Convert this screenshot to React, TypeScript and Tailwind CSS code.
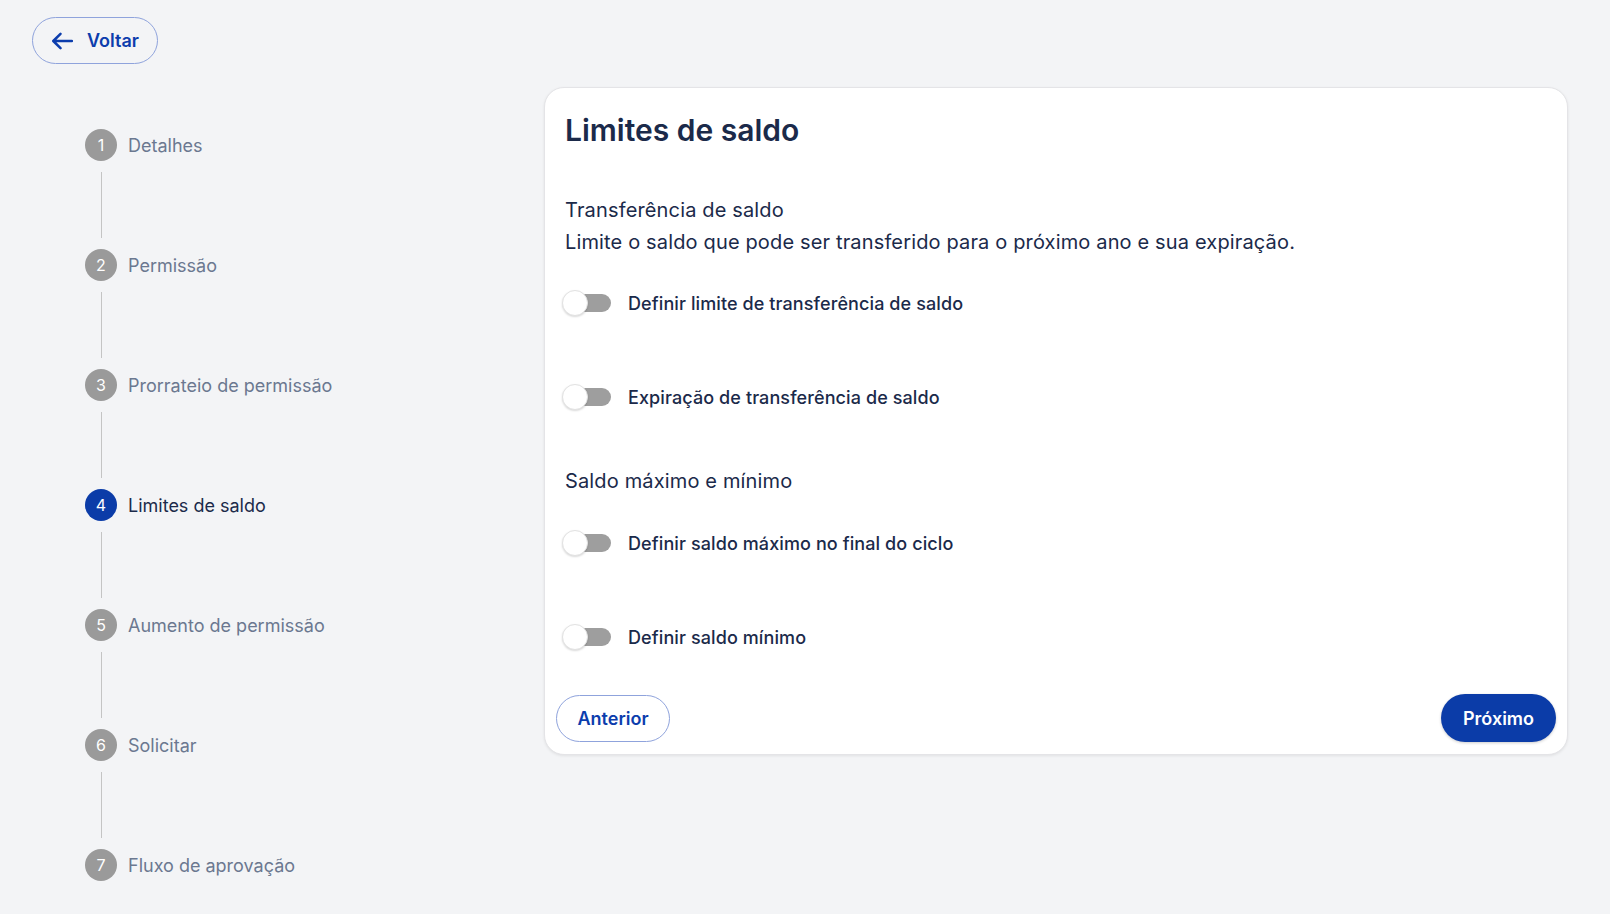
import React, { useState } from 'react';

const steps = [
  'Detalhes',
  'Permissão',
  'Prorrateio de permissão',
  'Limites de saldo',
  'Aumento de permissão',
  'Solicitar',
  'Fluxo de aprovação',
];

function Toggle({ checked, onChange }: { checked: boolean; onChange: () => void }) {
  return (
    <button
      type="button"
      onClick={onChange}
      className="relative w-[51px] h-[28px] shrink-0 ml-[-4px]"
    >
      <span
        className={`absolute left-[10px] top-[5px] w-[40px] h-[18px] rounded-full ${
          checked ? 'bg-[#0b3ca8]' : 'bg-[#9e9e9e]'
        }`}
      />
      <span
        className={`absolute top-[1px] w-[26px] h-[26px] rounded-full bg-white border border-[#e2e2e2] shadow-[0_1px_2px_rgba(0,0,0,0.15)] ${
          checked ? 'left-[24px]' : 'left-[1px]'
        }`}
      />
    </button>
  );
}

function ToggleRow({ label, className }: { label: string; className?: string }) {
  const [on, setOn] = useState(false);
  return (
    <div className={`flex items-center gap-[16px] h-[28px] ${className ?? ''}`}>
      <Toggle checked={on} onChange={() => setOn(!on)} />
      <span className="text-[18px] font-medium tracking-[0.1px] text-[#1b2a4a]">{label}</span>
    </div>
  );
}

export default function App() {
  const current = 4;

  return (
    <div
      className="min-h-screen bg-[#f3f4f6] pt-[17px] px-[32px]"
      style={{ fontFamily: 'Inter, "Noto Sans", sans-serif' }}
    >
      <button
        type="button"
        className="flex items-center h-[47px] w-[126px] pl-[18px] gap-[14px] rounded-full border border-[#8fa3dc] text-[#0c3dad] text-[18px] font-semibold"
      >
        <svg width="22" height="18" viewBox="0 0 22 18" fill="none">
          <path
            d="M21 9H2.5M9.5 1.8 2.3 9l7.2 7.2"
            stroke="currentColor"
            strokeWidth="2.5"
            strokeLinecap="round"
            strokeLinejoin="round"
          />
        </svg>
        Voltar
      </button>

      <div className="flex items-start mt-[23px]">
        <div className="w-[512px] shrink-0 pl-[53px] pt-[42px]">
          {steps.map((name, i) => {
            const n = i + 1;
            const active = n === current;
            return (
              <div key={name}>
                <div className="flex items-center gap-[11px] h-[32px]">
                  <div
                    className={`w-[32px] h-[32px] rounded-full flex items-center justify-center text-white text-[16px] ${
                      active ? 'bg-[#0b3ca8]' : 'bg-[#9a9a9a]'
                    }`}
                  >
                    {n}
                  </div>
                  <span
                    className={`text-[18px] ${active ? 'text-[#1b2a4a]' : 'text-[#6b7890]'}`}
                  >
                    {name}
                  </span>
                </div>
                {n < steps.length && (
                  <div className="w-px h-[66px] bg-[#c4c4c4] ml-[15.5px] my-[11px]" />
                )}
              </div>
            );
          })}
        </div>

        <div className="w-[1024px] bg-white rounded-[20px] border border-[#e4e4e7] shadow-[0_1px_3px_rgba(0,0,0,0.08)]">
          <div className="px-[20px] pt-[22px]">
            <h1 className="text-[30px] leading-[40px] font-semibold text-[#1b2a4a]">
              Limites de saldo
            </h1>

            <div className="mt-[44px] text-[20px] leading-[32px] tracking-[0.15px] text-[#1b2a4a]">
              <div>Transferência de saldo</div>
              <div>Limite o saldo que pode ser transferido para o próximo ano e sua expiração.</div>
            </div>

            <ToggleRow className="mt-[31px]" label="Definir limite de transferência de saldo" />
            <ToggleRow className="mt-[66px]" label="Expiração de transferência de saldo" />

            <div className="mt-[54px] text-[20px] leading-[32px] tracking-[0.15px] text-[#1b2a4a]">
              Saldo máximo e mínimo
            </div>

            <ToggleRow className="mt-[32px]" label="Definir saldo máximo no final do ciclo" />
            <ToggleRow className="mt-[66px]" label="Definir saldo mínimo" />
          </div>

          <div className="flex justify-between items-center px-[11px] pt-[43px] pb-[12px]">
            <button
              type="button"
              className="h-[47px] w-[114px] rounded-full border border-[#8fa3dc] text-[#0c3dad] text-[18px] font-semibold"
            >
              Anterior
            </button>
            <button
              type="button"
              className="h-[48px] w-[115px] rounded-full bg-[#0b3ca8] text-white text-[18px] font-semibold shadow-[0_1px_3px_rgba(0,0,0,0.2)]"
            >
              Próximo
            </button>
          </div>
        </div>
      </div>
    </div>
  );
}
